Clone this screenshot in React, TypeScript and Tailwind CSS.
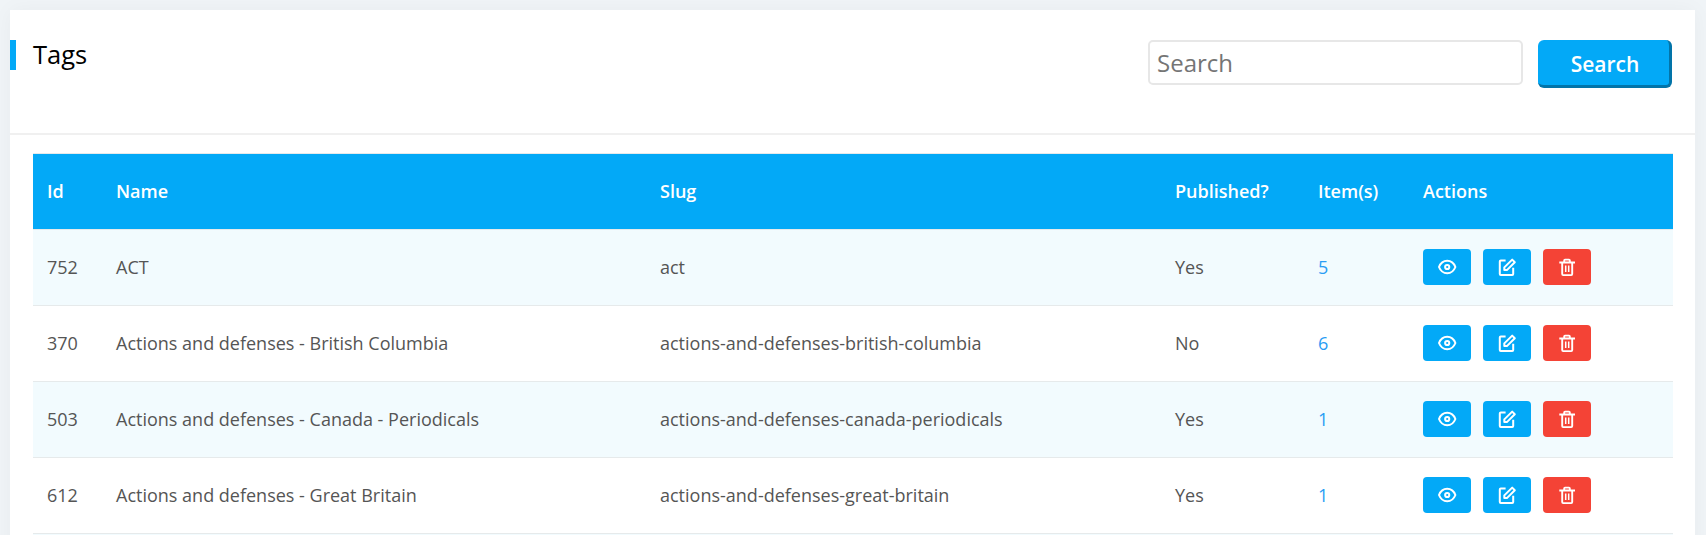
const rows = [
  { id: 752, name: "ACT", slug: "act", published: "Yes", items: 5 },
  { id: 370, name: "Actions and defenses - British Columbia", slug: "actions-and-defenses-british-columbia", published: "No", items: 6 },
  { id: 503, name: "Actions and defenses - Canada - Periodicals", slug: "actions-and-defenses-canada-periodicals", published: "Yes", items: 1 },
  { id: 612, name: "Actions and defenses - Great Britain", slug: "actions-and-defenses-great-britain", published: "Yes", items: 1 },
];

const grid = "grid grid-cols-[69px_544px_515px_143px_105px_1fr] items-center pl-[14px]";

function EyeIcon() {
  return (
    <svg width="20" height="20" viewBox="0 0 20 20" fill="none" stroke="white" strokeWidth="2">
      <path d="M2 10C3.6 5.9 6.6 3.8 10.2 3.8s6.6 2.1 8.2 6.2c-1.6 4.1-4.6 6.2-8.2 6.2S3.6 14.1 2 10z" strokeLinejoin="round" />
      <circle cx="10.2" cy="10" r="2.1" />
    </svg>
  );
}

function EditIcon() {
  return (
    <svg width="20" height="20" viewBox="0 0 20 20" fill="none" stroke="white" strokeWidth="2">
      <path d="M8.6 3.6H3.8a1 1 0 0 0-1 1v12.4a1 1 0 0 0 1 1H15.2a1 1 0 0 0 1-1V10.8" />
      <path d="M7.3 13.1V10.4L15.2 2.6 17.8 5.2 9.9 13.1z" strokeLinejoin="round" />
    </svg>
  );
}

function TrashIcon() {
  return (
    <svg width="20" height="20" viewBox="0 0 20 20" fill="none" stroke="white" strokeWidth="1.9">
      <path d="M2.3 5.5h15.7M7.2 5.5V3.4a.8.8 0 0 1 .8-.8h4a.8.8 0 0 1 .8.8V5.5" />
      <path d="M5.2 5.5V17.1a1 1 0 0 0 1 1h8a1 1 0 0 0 1-1V5.5" />
      <path d="M8.7 8.6v6.4M11.7 8.6v6.4" strokeWidth="1.5" />
    </svg>
  );
}

export default function App() {
  return (
    <div className="h-[535px] overflow-hidden bg-[#f0f4f7] pt-[10px] pr-[11px] pl-[10px] font-['Open_Sans',sans-serif]">
      <main className="h-[600px] bg-white shadow-[0_0_20px_rgba(0,0,0,0.04)]">
        <header className="flex h-[125px] items-start justify-between border-b-2 border-[#f0f0f0] pt-[30px] pr-[23px]">
          <div className="flex items-start">
            <span className="h-[30px] w-[6px] bg-[#03a9f7]" />
            <h1 className="ml-[17px] text-[25.5px] leading-[28px] text-black">Tags</h1>
          </div>
          <form className="flex items-start gap-[15px]">
            <input
              type="text"
              placeholder="Search"
              className="h-[45px] w-[375px] rounded-[5px] border-2 border-[#e7e7e7] px-[7px] text-[24px] placeholder:text-[#757575]"
            />
            <button
              type="button"
              className="h-[48px] w-[134px] rounded-[6px] border-r-[3px] border-b-[3px] border-[#0274a9] bg-[#03a9f7] pt-[4px] pl-[3px] text-[21px] font-semibold text-white"
            >
              Search
            </button>
          </form>
        </header>
        <section className="mt-[18px] mr-[22px] ml-[23px] text-[18px] text-[#555]">
          <div className={grid + " h-[76px] border-t border-[#e5eaec] bg-[#03a9f7] font-semibold text-white"}>
            <span>Id</span>
            <span>Name</span>
            <span>Slug</span>
            <span>Published?</span>
            <span>Item(s)</span>
            <span>Actions</span>
          </div>
          {rows.map((row) => (
            <div key={row.id} className={grid + " h-[76px] border-t border-[#e6eaeb] odd:bg-white even:bg-[#f2fbfe]"}>
              <span>{row.id}</span>
              <span>{row.name}</span>
              <span>{row.slug}</span>
              <span>{row.published}</span>
              <a className="text-[#2a9df4]">{row.items}</a>
              <div className="flex gap-3 pb-[2px]">
                <button type="button" className="flex h-9 w-12 items-center justify-center rounded-[4px] bg-[#03a9f7]">
                  <EyeIcon />
                </button>
                <button type="button" className="flex h-9 w-12 items-center justify-center rounded-[4px] bg-[#03a9f7]">
                  <EditIcon />
                </button>
                <button type="button" className="flex h-9 w-12 items-center justify-center rounded-[4px] bg-[#f44336]">
                  <TrashIcon />
                </button>
              </div>
            </div>
          ))}
          <div className="h-[76px] border-t border-[#e6eaeb] bg-[#f2fbfe]" />
        </section>
      </main>
    </div>
  );
}
